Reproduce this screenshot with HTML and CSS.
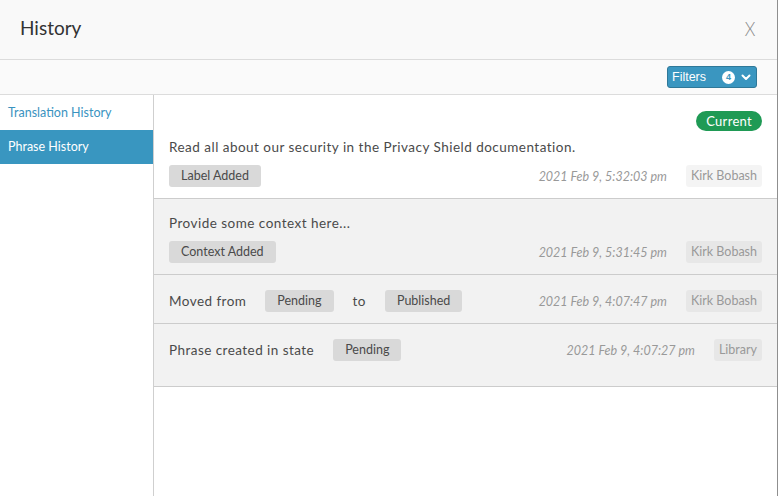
FILE: index.html
```html
<!DOCTYPE html>
<html>
<head>
<meta charset="utf-8">
<link rel="stylesheet" href="styles.css">
</head>
<body>
<div class="modal">
  <header class="modal-header">
    <h1 class="title">History</h1>
    <span class="close">X</span>
  </header>
  <div class="toolbar">
    <button class="filters">Filters <span class="badge">4</span>
      <svg class="chev" width="10" height="7" viewBox="0 0 10 7"><path d="M1.5 1.5 L5 5 L8.5 1.5" fill="none" stroke="#fff" stroke-width="2" stroke-linecap="round" stroke-linejoin="round"/></svg>
    </button>
  </div>
  <div class="main">
    <nav class="sidebar">
      <a class="nav-item first">Translation History</a>
      <a class="nav-item active">Phrase History</a>
    </nav>
    <section class="content">
      <div class="entry white">
        <div class="entry-top"><span class="current">Current</span></div>
        <div class="entry-text">Read all about our security in the Privacy Shield documentation.</div>
        <div class="entry-meta">
          <span class="tag">Label Added</span>
          <span class="spacer"></span>
          <span class="date">2021 Feb 9, 5:32:03 pm</span>
          <span class="author">Kirk Bobash</span>
        </div>
      </div>
      <div class="entry">
        <div class="entry-text">Provide some context here...</div>
        <div class="entry-meta">
          <span class="tag">Context Added</span>
          <span class="spacer"></span>
          <span class="date">2021 Feb 9, 5:31:45 pm</span>
          <span class="author">Kirk Bobash</span>
        </div>
      </div>
      <div class="entry">
        <div class="entry-meta">
          <span class="label">Moved from</span>
          <span class="tag">Pending</span>
          <span class="label">to</span>
          <span class="tag">Published</span>
          <span class="spacer"></span>
          <span class="date">2021 Feb 9, 4:07:47 pm</span>
          <span class="author">Kirk Bobash</span>
        </div>
      </div>
      <div class="entry last">
        <div class="entry-meta">
          <span class="label">Phrase created in state</span>
          <span class="tag">Pending</span>
          <span class="spacer"></span>
          <span class="date">2021 Feb 9, 4:07:27 pm</span>
          <span class="author">Library</span>
        </div>
      </div>
    </section>
  </div>
</div>
</body>
</html>
```
FILE: styles.css
```css
html, body {
  margin: 0;
  padding: 0;
  background: #fff;
}
body {
  font-family: "Lato", "Open Sans", sans-serif;
  color: #444;
}
.modal {
  width: 777px;
  height: 496px;
  border-right: 1px solid #8f8f8f;
  display: flex;
  flex-direction: column;
  box-sizing: content-box;
}
.modal-header {
  height: 59px;
  border-bottom: 1px solid #dcdcdc;
  background: #f9f9f9;
  display: flex;
  align-items: center;
  justify-content: space-between;
  padding: 0 22px 0 20px;
}
.title {
  margin: 0;
  font-size: 19px;
  font-weight: 400;
  color: #333;
  padding-bottom: 4px;
}
.close {
  display: inline-block;
  font-size: 20px;
  font-weight: 300;
  color: #8a8a8a;
  padding-bottom: 4px;
  transform: scaleX(0.85);
  transform-origin: right center;
}
.toolbar {
  height: 34px;
  border-bottom: 1px solid #dcdcdc;
  background: #fafafa;
  display: flex;
  align-items: center;
  justify-content: flex-end;
  padding-right: 20px;
}
.filters {
  width: 90px;
  height: 22px;
  box-sizing: border-box;
  background: #3a96c0;
  border: 1px solid #2f7898;
  border-radius: 3px;
  color: #fff;
  font-family: "Liberation Sans", Arial, sans-serif;
  font-size: 12.5px;
  display: flex;
  align-items: center;
  padding: 0 0 0 4px;
}
.badge {
  width: 13px;
  height: 13px;
  border-radius: 50%;
  background: #fff;
  color: #3a96c0;
  font-size: 9px;
  font-weight: 700;
  display: inline-flex;
  align-items: center;
  justify-content: center;
  margin-left: 16px;
}
.chev {
  margin-left: 6px;
}
.main {
  flex: 1;
  display: flex;
}
.sidebar {
  width: 153px;
  border-right: 1px solid #cfcfcf;
  display: flex;
  flex-direction: column;
}
.nav-item {
  display: block;
  height: 34px;
  line-height: 34px;
  padding-left: 8px;
  font-size: 12.5px;
  color: #3a93bf;
}
.nav-item.first {
  height: 35px;
  line-height: 35px;
}
.nav-item.active {
  background: #3996c0;
  color: #fff;
}
.content {
  flex: 1;
  display: flex;
  flex-direction: column;
}
.entry {
  background: #f2f2f2;
  border-bottom: 1px solid #cccccc;
  padding: 15px 15px 11px;
}
.entry.white {
  background: #fff;
  padding-top: 16px;
}
.entry.last {
  padding-bottom: 25px;
}
.entry-top {
  display: flex;
  justify-content: flex-end;
  margin-bottom: 7px;
}
.current {
  height: 20px;
  line-height: 20px;
  padding: 0 10px;
  border-radius: 10px;
  background: #1f9a55;
  color: #fff;
  font-size: 13px;
  letter-spacing: 0.3px;
}
.entry-text {
  height: 18px;
  line-height: 18px;
  font-size: 13.5px;
  letter-spacing: 0.48px;
  color: #4a4a4a;
  margin-bottom: 9px;
}
.entry-meta {
  display: flex;
  align-items: center;
  height: 22px;
}
.label {
  font-size: 13.5px;
  letter-spacing: 0.45px;
  color: #4a4a4a;
  margin-right: 19px;
}
.tag {
  height: 22px;
  line-height: 22px;
  padding: 0 12px;
  border-radius: 3px;
  background: #d9d9d9;
  color: #4a4a4a;
  font-size: 12.5px;
  margin-right: 19px;
}
.spacer {
  flex: 1;
}
.date {
  font-style: italic;
  font-size: 12.5px;
  color: #999;
  margin-right: 19px;
}
.author {
  height: 22px;
  line-height: 22px;
  padding: 0 5px;
  border-radius: 3px;
  background: rgba(0, 0, 0, 0.045);
  color: #999;
  font-size: 12.5px;
}
```
